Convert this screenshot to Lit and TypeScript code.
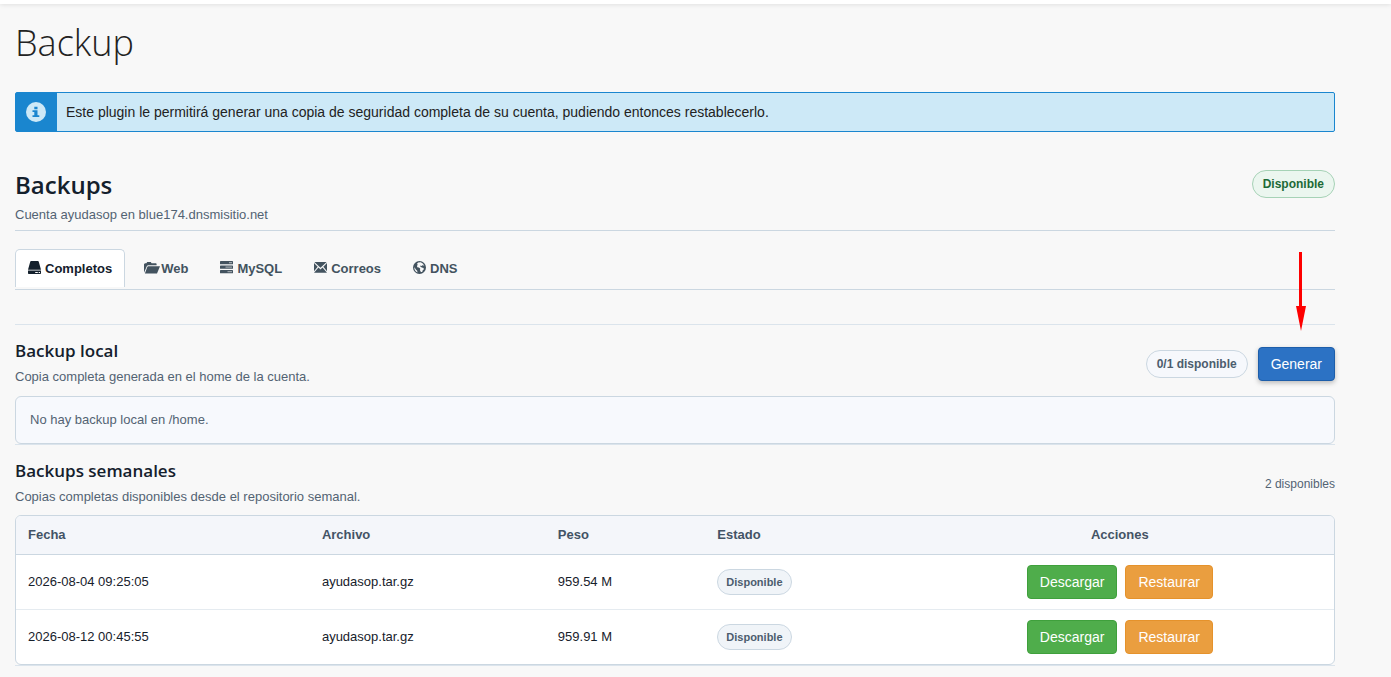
import { LitElement, html, css, svg } from "lit";
import { customElement, property, state } from "lit/decorators.js";
import { classMap } from "lit/directives/class-map.js";

interface BackupRow {
  fecha: string;
  archivo: string;
  peso: string;
  estado: string;
}

const icons: Record<string, unknown> = {
  disk: svg`<path d="M3.200 0h6.600c.5 0 .8.2.9.6L13 8.800H0L2.300.6C2.400.2 2.700 0 3.200 0z"/><path fill-rule="evenodd" d="M0 9.400h13v2.900c0 .4-.3.7-.7.7H.7c-.4 0-.7-.3-.7-.7zM7.200 11v.9h2.600V11zm3.500 0v.9h1.300V11z"/>`,
  folder: svg`<path d="M0 11.800V3.200L.9 2.200h1.500L3.200 1h3.600l.8 1.200h4.200c.5 0 .8.4.8.8v1.200H4.400c-.7 0-1.200.3-1.500.9z"/><path d="M4.300 5.200H16l-3 7.300H.9l2.500-6.700c.2-.4.5-.6.9-.6z"/>`,
  stack: svg`<rect width="13" height="3.300" rx=".6"/><rect y="4.500" width="13" height="3.300" rx=".6"/><rect y="9" width="13" height="3.300" rx=".6"/><path fill="#f8f8f8" fill-opacity=".5" d="M9 1h3v1.300H9zM5.500 5.500H12v1.300H5.500zM7.500 10H12v1.300H7.500z"/>`,
  mail: svg`<path d="M.4 1h12.200L6.500 6.800zM0 1.900l3.700 3.800L0 10.300zM13 1.900v8.400L9.300 5.700zM4.500 6.500l2 1.900 2-1.900L13 11.800H0z"/>`,
  globe: svg`<path fill-rule="evenodd" d="M6.500 0a6.500 6.500 0 1 1 0 13 6.500 6.500 0 0 1 0-13zM7.600 1.200 5.200 1.500 3.800 3l1 .6-.8 1.300.3 1.300 1.500.2 1.400 1.100-.2 1.700.9 1.900h1.300l.4-1.600 1.300-1.300-.4-1.300-1.700-.5-1.600-.8.2-1.100 1.500.6.8-1.200 1.600 1.100c-.5-1.600-1.700-3.100-3.600-3.800zM1.500 6.200l-.2.9c.2 2 1.400 3.800 3.200 4.500l-.3-1.800-1.300-1.300z"/>`,
};

const tabs = [
  { id: "completos", label: "Completos", icon: "disk" },
  { id: "web", label: "Web", icon: "folder" },
  { id: "mysql", label: "MySQL", icon: "stack" },
  { id: "correos", label: "Correos", icon: "mail" },
  { id: "dns", label: "DNS", icon: "globe" },
];

const font = css`"Liberation Sans", Arial, sans-serif`;

@customElement("backup-table")
class BackupTable extends LitElement {
  static styles = css`
    :host {
      display: block;
      font: 13px/18px ${font};
      color: #17212b;
      border: 1px solid #cbd7e1;
      border-radius: 6px;
      background: #fff;
      overflow: hidden;
    }
    table {
      width: 100%;
      border-collapse: separate;
      border-spacing: 0;
      table-layout: fixed;
    }
    th,
    td {
      box-sizing: border-box;
      padding: 10px 12px;
      text-align: left;
      vertical-align: middle;
    }
    th {
      background: #f4f6fa;
      color: #435365;
      font-weight: 700;
      border-bottom: 1px solid #cbd7e1;
    }
    td {
      border-bottom: 1px solid #e5ebf0;
    }
    tr:last-child td {
      border-bottom: 0;
    }
    .date { width: 22.3%; }
    .file { width: 17.9%; }
    .size { width: 12.1%; }
    .status { width: 15.2%; }
    .center { text-align: center; }
    .actions {
      display: flex;
      justify-content: center;
      gap: 8px;
    }
    .pill {
      display: inline-block;
      vertical-align: middle;
      padding: 4px 8px;
      border: 1px solid #cbd7e1;
      border-radius: 13px;
      background: #f0f4f8;
      color: #4c5d6e;
      font-size: 11px;
      line-height: 16px;
      font-weight: 700;
    }
    button {
      padding: 6px 12px;
      border: 1px solid;
      border-radius: 4px;
      color: #fff;
      font: 14px/20px ${font};
      cursor: pointer;
    }
    .download { background: #4fad4b; border-color: #3fa03c; }
    .restore { background: #ea9e3f; border-color: #e5922b; }
  `;

  @property({ attribute: false }) rows: BackupRow[] = [];

  render() {
    return html`
      <table>
        <thead>
          <tr>
            <th class="date" scope="col">Fecha</th>
            <th class="file" scope="col">Archivo</th>
            <th class="size" scope="col">Peso</th>
            <th class="status" scope="col">Estado</th>
            <th class="center" scope="col">Acciones</th>
          </tr>
        </thead>
        <tbody>
          ${this.rows.map(
            (row) => html`
              <tr>
                <td>${row.fecha}</td>
                <td>${row.archivo}</td>
                <td>${row.peso}</td>
                <td><span class="pill">${row.estado}</span></td>
                <td>
                  <div class="actions">
                    <button type="button" class="download">Descargar</button>
                    <button type="button" class="restore">Restaurar</button>
                  </div>
                </td>
              </tr>
            `,
          )}
        </tbody>
      </table>
    `;
  }
}

@customElement("app-root")
class AppRoot extends LitElement {
  static styles = css`
    :host {
      display: block;
      box-sizing: border-box;
      min-height: 100vh;
      background: #f8f8f8;
      color: #222;
      font: 13px/20px ${font};
    }
    h1,
    h2,
    h3,
    p {
      margin: 0;
    }
    h1,
    h2,
    h3 {
      font-family: "Open Sans", sans-serif;
      color: #14202c;
    }
    h1 {
      color: #222;
      font-size: 36px;
      line-height: 40px;
      font-weight: 300;
    }
    h2 {
      font-size: 24px;
      line-height: 26px;
      font-weight: 600;
    }
    h3 {
      font-size: 17px;
      line-height: 20px;
      font-weight: 600;
    }
    .topbar {
      height: 4px;
      background: #fff;
      box-shadow: 0 0 5px rgba(0, 0, 0, 0.15);
    }
    main {
      padding: 19px 56px 10px 15px;
    }
    .info {
      display: flex;
      margin: 29px 0 38px;
      border: 1px solid #1a86cf;
      border-radius: 2px;
      background: #cde9f7;
      font-size: 14px;
    }
    .info-icon {
      display: flex;
      align-items: center;
      padding: 0 11px 0 10px;
      background: #1a86cf;
    }
    .info p {
      padding: 9px;
    }
    .muted {
      color: #536373;
    }
    .account {
      display: flex;
      align-items: flex-start;
      justify-content: space-between;
      padding-bottom: 5px;
      border-bottom: 1px solid #cbd7e1;
    }
    .account h2 {
      margin: 2px 0 7px;
    }
    .pill {
      padding: 4px 10px;
      border: 1px solid #cbd7e1;
      border-radius: 14px;
      background: #f6f8fc;
      color: #4c5d6e;
      font-size: 12px;
      line-height: 18px;
      font-weight: 700;
    }
    .pill.ok {
      border-color: #a6d2b6;
      background: #ebf6ef;
      color: #1d6a37;
    }
    .tabs {
      display: flex;
      gap: 6px;
      margin: 18px 0 34px;
      padding-bottom: 2px;
      border-bottom: 1px solid #cbd7e1;
    }
    .tab {
      display: flex;
      align-items: center;
      gap: 4px;
      padding: 10px 12px 9px;
      border: 1px solid transparent;
      border-bottom: 0;
      border-radius: 5px 5px 0 0;
      background: none;
      color: #43535f;
      font: 700 13px/18px ${font};
      cursor: pointer;
    }
    .tab.active {
      border-color: #cbd7e1;
      background: #fff;
      color: #14202c;
    }
    .tab svg {
      width: 13px;
      height: 13px;
      margin-bottom: 3px;
      overflow: visible;
      fill: currentColor;
    }
    section {
      padding-top: 16px;
      border-top: 1px solid #dbe4ec;
    }
    section:last-child {
      border-bottom: 1px solid #dbe4ec;
    }
    .head {
      display: flex;
      align-items: center;
      justify-content: space-between;
    }
    .head p {
      margin-top: 7px;
      line-height: 18px;
    }
    .tools {
      display: flex;
      align-items: center;
      gap: 10px;
    }
    .count {
      font-size: 12px;
    }
    .generate {
      padding: 6px 12px;
      border: 1px solid #1d5eaa;
      border-radius: 4px;
      background: #2c72c4;
      box-shadow: 0 2px 5px rgba(0, 0, 0, 0.25);
      color: #fff;
      font: 14px/20px ${font};
      cursor: pointer;
    }
    .target {
      position: relative;
      display: flex;
    }
    .arrow {
      position: absolute;
      left: 38px;
      bottom: 50px;
      width: 10px;
      height: 79px;
      fill: #fe0000;
      pointer-events: none;
    }
    .empty {
      margin-top: 10px;
      padding: 14px;
      border: 1px solid #cbd7e1;
      border-radius: 6px;
      background: #f7f9fd;
      line-height: 18px;
    }
    backup-table {
      margin-top: 9px;
    }
  `;

  @state() private current = "completos";

  private rows: BackupRow[] = [
    { fecha: "2026-08-04 09:25:05", archivo: "ayudasop.tar.gz", peso: "959.54 M", estado: "Disponible" },
    { fecha: "2026-08-12 00:45:55", archivo: "ayudasop.tar.gz", peso: "959.91 M", estado: "Disponible" },
  ];

  render() {
    return html`
      <div class="topbar"></div>
      <main>
        <h1>Backup</h1>
        <div class="info">
          <div class="info-icon">
            <svg width="20" height="20" viewBox="0 0 20 20" aria-hidden="true">
              <circle cx="10" cy="10" r="10" fill="#cde9f7" />
              <path fill="#1a86cf" d="M8.300 4.800h3.200v2.400H8.300zM6.500 8.300h5v5h1.800V15H6.500v-1.700h1.800V10H6.500z" />
            </svg>
          </div>
          <p>Este plugin le permitirá generar una copia de seguridad completa de su cuenta, pudiendo entonces restablecerlo.</p>
        </div>

        <header class="account">
          <div>
            <h2>Backups</h2>
            <p class="muted">Cuenta ayudasop en blue174.dnsmisitio.net</p>
          </div>
          <span class="pill ok">Disponible</span>
        </header>

        <div class="tabs" role="tablist">
          ${tabs.map(
            (tab) => html`
              <button
                type="button"
                role="tab"
                aria-selected=${this.current === tab.id}
                class=${classMap({ tab: true, active: this.current === tab.id })}
                @click=${() => (this.current = tab.id)}
              >
                <svg viewBox="0 0 13 13" aria-hidden="true">${icons[tab.icon]}</svg>${tab.label}
              </button>
            `,
          )}
        </div>

        <section>
          <div class="head">
            <div>
              <h3>Backup local</h3>
              <p class="muted">Copia completa generada en el home de la cuenta.</p>
            </div>
            <div class="tools">
              <span class="pill">0/1 disponible</span>
              <div class="target">
                <button type="button" class="generate">Generar</button>
                <svg class="arrow" viewBox="0 0 10 79" aria-hidden="true">
                  <path d="M3 0h3v54h4L5 79 0 54h3z" />
                </svg>
              </div>
            </div>
          </div>
          <div class="empty muted">No hay backup local en /home.</div>
        </section>

        <section>
          <div class="head">
            <div>
              <h3>Backups semanales</h3>
              <p class="muted">Copias completas disponibles desde el repositorio semanal.</p>
            </div>
            <span class="count muted">2 disponibles</span>
          </div>
          <backup-table .rows=${this.rows}></backup-table>
        </section>
      </main>
    `;
  }
}
